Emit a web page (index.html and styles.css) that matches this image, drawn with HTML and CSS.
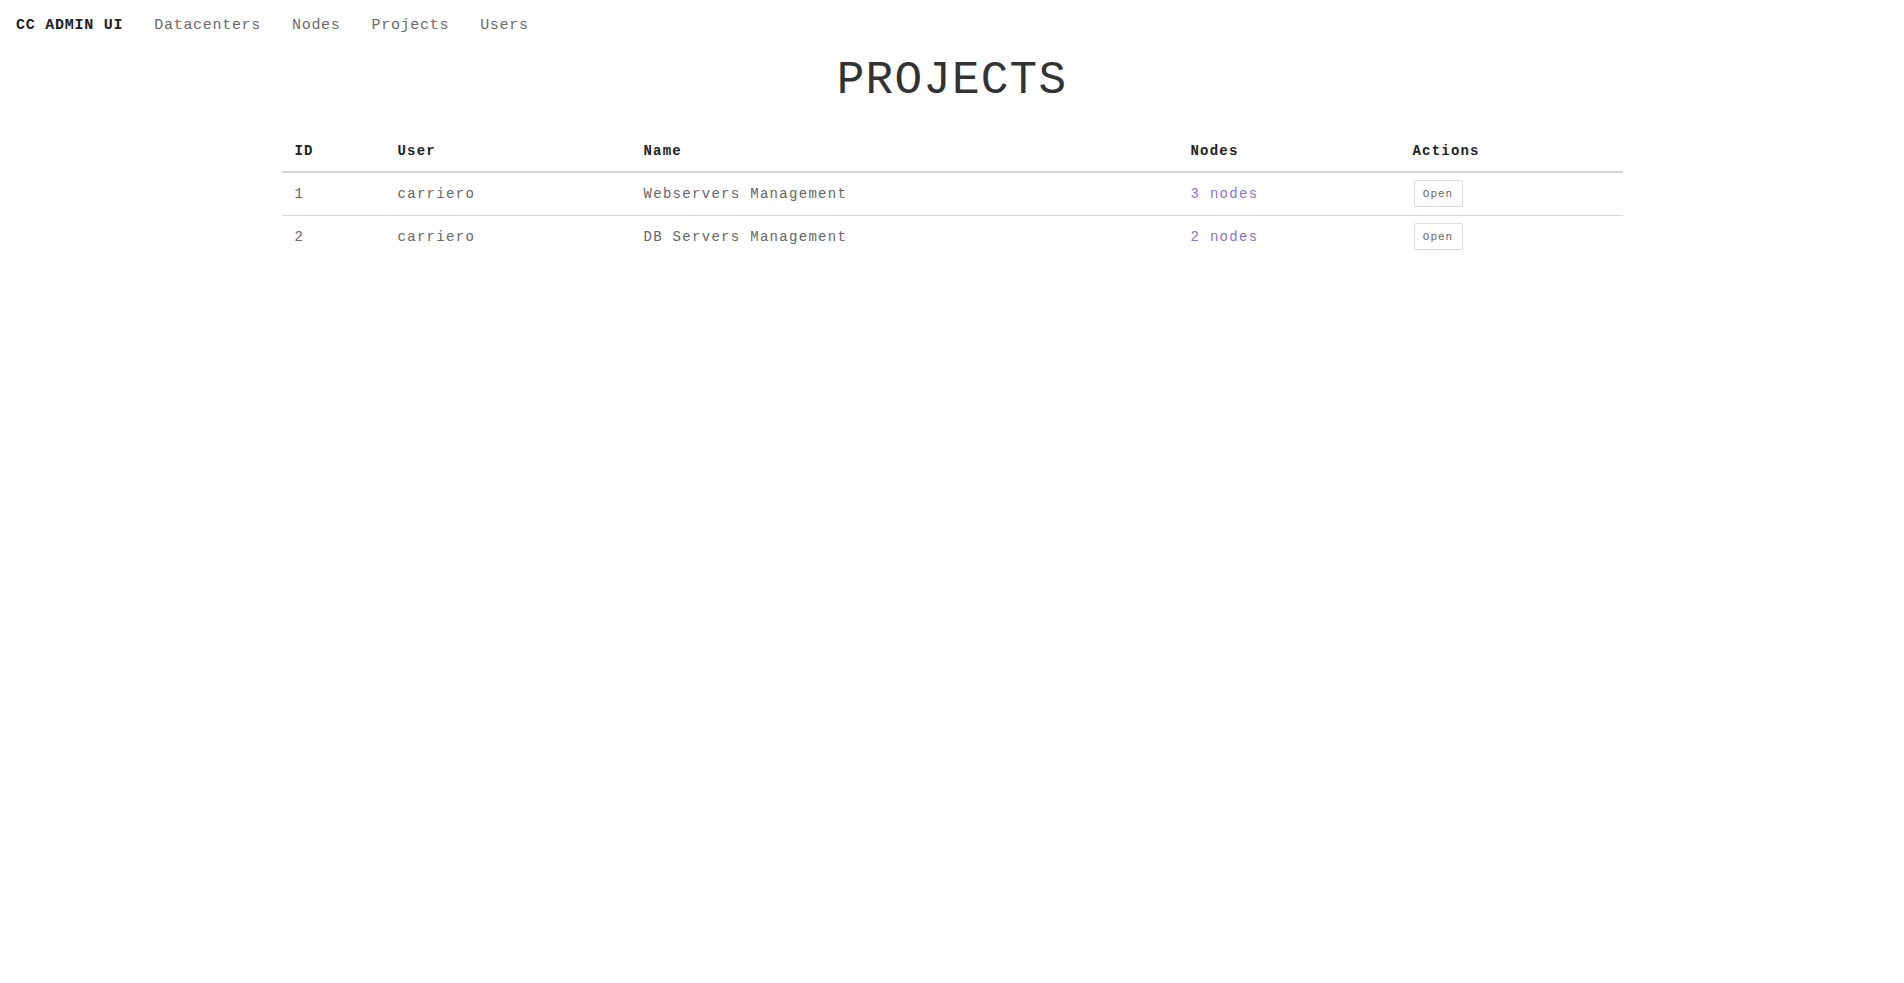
FILE: index.html
```html
<!DOCTYPE html>
<html lang="en">
<head>
<meta charset="utf-8">
<title>CC Admin UI - Projects</title>
<link rel="stylesheet" href="styles.css">
</head>
<body>
<nav class="topnav">
  <a class="brand" href="#">CC ADMIN UI</a>
  <a class="nav-link" href="#">Datacenters</a>
  <a class="nav-link" href="#">Nodes</a>
  <a class="nav-link" href="#">Projects</a>
  <a class="nav-link" href="#">Users</a>
</nav>
<main class="page">
  <h1 class="page-title">PROJECTS</h1>
  <table class="data-table">
    <colgroup>
      <col class="col-id">
      <col class="col-user">
      <col class="col-name">
      <col class="col-nodes">
      <col class="col-actions">
    </colgroup>
    <thead>
      <tr><th>ID</th><th>User</th><th>Name</th><th>Nodes</th><th>Actions</th></tr>
    </thead>
    <tbody>
      <tr>
        <td>1</td><td>carriero</td><td>Webservers Management</td>
        <td><a class="link" href="#">3 nodes</a></td>
        <td><button class="btn" type="button">Open</button></td>
      </tr>
      <tr>
        <td>2</td><td>carriero</td><td>DB Servers Management</td>
        <td><a class="link" href="#">2 nodes</a></td>
        <td><button class="btn" type="button">Open</button></td>
      </tr>
    </tbody>
  </table>
</main>
</body>
</html>
```
FILE: styles.css
```css
html, body {
  margin: 0;
  padding: 0;
  background: #fff;
}
body {
  font-family: "Liberation Mono", "DejaVu Sans Mono", monospace;
  color: #555;
}
.topnav {
  display: flex;
  align-items: center;
  gap: 31px;
  padding: 14px 16px 10px;
  font-size: 15px;
  line-height: 24px;
  letter-spacing: 0.7px;
}
.topnav a {
  text-decoration: none;
  color: #6a6a6a;
}
.topnav .brand {
  color: #222;
  font-weight: bold;
  letter-spacing: 0.75px;
}
.page {
  display: flex;
  flex-direction: column;
  align-items: center;
}
.page-title {
  margin: 10px 0 27px;
  font-size: 46px;
  line-height: 46px;
  font-weight: normal;
  color: #333;
  letter-spacing: 1.2px;
}
.data-table {
  width: 1341px;
  border-collapse: collapse;
  font-size: 14px;
  letter-spacing: 1.3px;
}
.col-id { width: 103px; }
.col-user { width: 246px; }
.col-name { width: 547px; }
.col-nodes { width: 222px; }
.col-actions { width: 223px; }
.data-table th {
  text-align: left;
  font-weight: bold;
  color: #222;
  padding: 10px 13px;
  line-height: 20px;
  letter-spacing: 1.2px;
  border-bottom: 2px solid #d4d4d4;
}
.data-table td {
  padding: 7px 13px 8px;
  line-height: 20px;
  height: 27px;
  vertical-align: middle;
  color: #666;
}
.data-table tbody tr + tr td {
  border-top: 1px solid #d8d8d8;
}
.link {
  color: #8b72d8;
  text-decoration: none;
}
.btn {
  display: block;
  margin-left: 1px;
  font-family: inherit;
  font-size: 11px;
  letter-spacing: 1px;
  color: #666;
  background: #fff;
  border: 1px solid #dcdcdc;
  border-radius: 2px;
  width: 49px;
  height: 27px;
  padding: 0;
  cursor: pointer;
}
```
